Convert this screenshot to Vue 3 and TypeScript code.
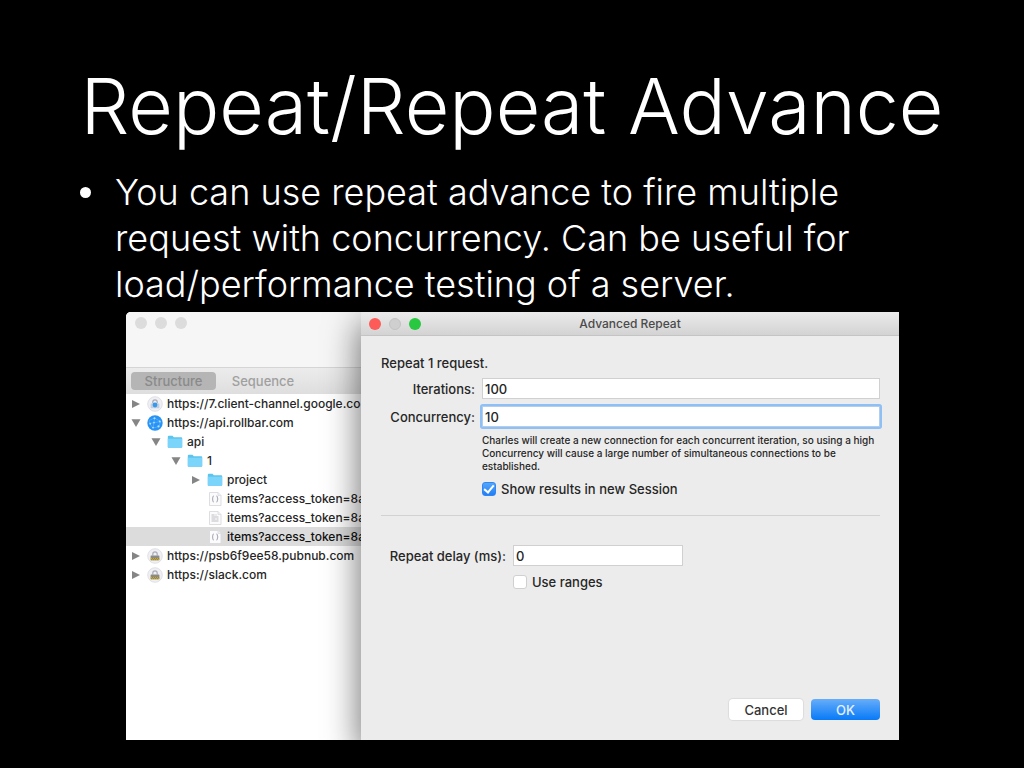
<script setup lang="ts">
import { ref } from 'vue'

type IconKind = 'lock-blue' | 'globe' | 'folder' | 'json' | 'text' | 'lock'

interface TreeRow {
  label: string
  icon: IconKind
  depth: number
  arrow?: 'open' | 'closed'
  selected?: boolean
}

const rows: TreeRow[] = [
  { label: 'https://7.client-channel.google.co', icon: 'lock-blue', depth: 0, arrow: 'closed' },
  { label: 'https://api.rollbar.com', icon: 'globe', depth: 0, arrow: 'open' },
  { label: 'api', icon: 'folder', depth: 1, arrow: 'open' },
  { label: '1', icon: 'folder', depth: 2, arrow: 'open' },
  { label: 'project', icon: 'folder', depth: 3, arrow: 'closed' },
  { label: 'items?access_token=8a', icon: 'json', depth: 3 },
  { label: 'items?access_token=8a', icon: 'text', depth: 3 },
  { label: 'items?access_token=8a', icon: 'json', depth: 3, selected: true },
  { label: 'https://psb6f9ee58.pubnub.com', icon: 'lock', depth: 0, arrow: 'closed' },
  { label: 'https://slack.com', icon: 'lock', depth: 0, arrow: 'closed' },
]

const iterations = ref('100')
const concurrency = ref('10')
const delay = ref('0')
const showResults = ref(true)
const useRanges = ref(false)
</script>

<template>
  <main class="slide">
    <h1>Repeat/Repeat Advance</h1>
    <ul class="points">
      <li>
        <span class="bullet"></span>
        <p>You can use repeat advance to fire multiple request with concurrency. Can be useful for load/performance testing of a server.</p>
      </li>
    </ul>

    <section class="desktop">
      <div class="browser">
        <header class="browser-bar">
          <span class="light"></span><span class="light"></span><span class="light"></span>
        </header>
        <nav class="tabs">
          <button type="button" class="tab active">Structure</button>
          <button type="button" class="tab">Sequence</button>
        </nav>
        <ul class="tree">
          <li v-for="(row, i) in rows" :key="i" :class="['row', 'depth-' + row.depth, { selected: row.selected }]">
            <span class="arrow">
              <svg v-if="row.arrow" width="10" height="10" viewBox="0 0 10 10" fill="#858585">
                <path v-if="row.arrow === 'closed'" d="M1 1 9 5 1 9Z" />
                <path v-else d="M.5 1.2h9L5 9Z" />
              </svg>
            </span>
            <svg class="icon" width="16" height="16" viewBox="0 0 16 16">
              <template v-if="row.icon === 'lock-blue' || row.icon === 'lock'">
                <circle cx="8" cy="8" r="7.3" fill="#f0f0f4" stroke="#d9dae0" stroke-width=".8" />
                <path d="M5.8 7.500V6a2.200 2.200 0 0 1 4.400 0v1.500" fill="none" stroke="#a9adb8" stroke-width="1.200" />
                <rect x="3.600" y="7.400" width="8.800" height="4.800" rx=".6" :fill="row.icon === 'lock' ? '#8b8a86' : '#c3cfdf'" />
                <path v-if="row.icon === 'lock'" d="M3.600 10h8.800v2.200H3.600Z" fill="#d2b548" />
                <path v-if="row.icon === 'lock'" d="M4.400 12.200l1.200-2.200m.8 2.200 1.200-2.200m.8 2.200 1.200-2.200m.8 2.200 1.200-2.200" stroke="#6b6033" stroke-width=".7" />
                <circle v-if="row.icon === 'lock-blue'" cx="8" cy="9" r="2.400" fill="#3699ee" />
              </template>
              <template v-else-if="row.icon === 'globe'">
                <circle cx="8" cy="8" r="7.700" fill="#2793f5" />
                <path d="M2 5.500 7.500 3l6 3.500-1.500 5-6 1.500-3-4ZM7.500 3 6 13M2.200 8.500l11.300-2" fill="none" stroke="#5db2fa" stroke-width=".7" />
                <g fill="#b5defd">
                  <circle cx="7.500" cy="3.200" r="1" /><circle cx="3.200" cy="8.700" r=".9" />
                  <circle cx="12.800" cy="6.500" r=".9" /><circle cx="6" cy="12.600" r=".9" />
                  <circle cx="11.500" cy="11.400" r="1.100" /><circle cx="7" cy="7.600" r=".9" />
                </g>
              </template>
              <template v-else-if="row.icon === 'folder'">
                <path d="M.8 2.800q0-1 1-1h3.700l1.300 1.400h7.400q1 0 1 1v8.800q0 .8-.8.800H1.600q-.8 0-.8-.8Z" fill="#5cc4ed" />
                <path d="M.8 4.800h14.400V13q0 .8-.8.800H1.600q-.8 0-.8-.8Z" fill="#7bd5fa" />
              </template>
              <template v-else>
                <path d="M2.500 1.500h8.500l3 3v10H2.500Z" fill="#fbfbfc" stroke="#d9d9df" stroke-width=".9" />
                <path d="M11 1.500v3h3" fill="#eeeef2" stroke="#d9d9df" stroke-width=".7" />
                <path v-if="row.icon === 'json'" d="M6.800 5q-1 0-1 1v1.200q0 .8-.8.800.8 0 .8.800V10q0 1 1 1M9.400 5q1 0 1 1v1.200q0 .8.800.8-.8 0-.8.800V10q0 1-1 1" fill="none" stroke="#9b9ba8" stroke-width=".9" />
                <path v-else d="M4.500 5h3m1 0h1M4.500 7h7M4.500 9h4m1 0h2M4.500 11h7" stroke="#b4b4be" stroke-width=".9" />
              </template>
            </svg>
            <span class="name">{{ row.label }}</span>
          </li>
        </ul>
      </div>

      <form class="dialog" @submit.prevent>
        <header class="dialog-bar">
          <div class="lights">
            <span class="light red"></span><span class="light gray"></span><span class="light green"></span>
          </div>
          <h2>Advanced Repeat</h2>
        </header>
        <div class="dialog-body">
          <p class="intro">Repeat 1 request.</p>
          <div class="fields">
            <label for="iterations">Iterations:</label>
            <input id="iterations" v-model="iterations" type="text" />
            <label for="concurrency">Concurrency:</label>
            <input id="concurrency" v-model="concurrency" class="focused" type="text" />
            <p class="help">Charles will create a new connection for each concurrent iteration, so using a high Concurrency will cause a large number of simultaneous connections to be established.</p>
            <label class="check results">
              <input v-model="showResults" type="checkbox" />Show results in new Session
            </label>
          </div>
          <hr />
          <div class="fields delay">
            <label for="delay">Repeat delay (ms):</label>
            <input id="delay" v-model="delay" type="text" />
            <label class="check ranges">
              <input v-model="useRanges" type="checkbox" />Use ranges
            </label>
          </div>
          <footer class="actions">
            <button type="button" class="cancel">Cancel</button>
            <button type="submit" class="ok">OK</button>
          </footer>
        </div>
      </form>
    </section>
  </main>
</template>

<style>
body {
  margin: 0;
  background: #000;
}
</style>

<style scoped>
* {
  box-sizing: border-box;
}

.slide {
  display: flex;
  flex-direction: column;
  min-height: 100vh;
  padding: 60px 80px 28px;
  background: #000;
  color: #fff;
  font-family: Inter, "Liberation Sans", sans-serif;
}

h1,
h2,
p,
ul {
  margin: 0;
  padding: 0;
  list-style: none;
  font-weight: inherit;
}

h1 {
  font-size: 77px;
  line-height: 92px;
  font-weight: 300;
  text-align: center;
  white-space: nowrap;
}

.points {
  margin-top: 17px;
  font-size: 36px;
  line-height: 46px;
  font-weight: 300;
}

.points li {
  display: flex;
  gap: 24px;
}

.bullet {
  flex: none;
  width: 11px;
  height: 11px;
  margin-top: 18px;
  border-radius: 50%;
  background: #fff;
}

.points p {
  max-width: 750px;
}

.desktop {
  display: flex;
  flex: 1;
  margin: 5px 45px 0 46px;
  overflow: hidden;
  border-top-left-radius: 5px;
  background: #fff;
  color: #262626;
  font-size: 13px;
  font-weight: 500;
}

.browser {
  flex: 0 0 235px;
  min-width: 0;
  overflow: hidden;
  background: #fff;
}

.browser-bar {
  display: flex;
  gap: 8px;
  height: 55px;
  padding: 5px 9px;
  background: #f6f6f6;
}

.light {
  width: 12px;
  height: 12px;
  border-radius: 50%;
  background: #dcdcdc;
}

.tabs {
  display: flex;
  gap: 1px;
  height: 27px;
  padding: 4px 5px;
  border-top: 1px solid #d5d5d5;
  background: linear-gradient(#ececec, #dedede);
}

.tab {
  width: 92px;
  height: 18px;
  padding: 0;
  border: 0;
  border-radius: 4px;
  background: none;
  color: #a0a0a0;
  font: inherit;
  line-height: 18px;
}

.tab.active {
  width: 85px;
  background: #b5b5b5;
  color: #8a8a8a;
}

.row {
  display: flex;
  align-items: center;
  height: 19px;
  padding-left: 5px;
  font-size: 12px;
  white-space: nowrap;
}

.depth-1 {
  padding-left: 25px;
}

.depth-2 {
  padding-left: 45px;
}

.depth-3 {
  padding-left: 65px;
}

.row.selected {
  background: #dcdcdc;
  color: #111;
}

.arrow {
  display: flex;
  flex: none;
  width: 16px;
}

.icon {
  flex: none;
  margin-right: 4px;
}

.dialog {
  position: relative;
  display: flex;
  flex: 1;
  flex-direction: column;
  min-width: 0;
  border-top-left-radius: 5px;
  background: #ececec;
  box-shadow: 0 12px 34px 2px rgba(0, 0, 0, 0.55);
}

.dialog-bar {
  display: grid;
  grid-template-columns: 60px 1fr 60px;
  align-items: center;
  height: 24px;
  padding: 0 8px;
  border-bottom: 1px solid #c4c4c4;
  border-top-left-radius: 5px;
  background: linear-gradient(#ebebeb, #d3d3d3);
}

.lights {
  display: flex;
  gap: 8px;
}

.light.red {
  background: #fc5b57;
}

.light.gray {
  border: 1px solid #c3c3c3;
  background: #cfcfcf;
}

.light.green {
  background: #28c840;
}

h2 {
  color: #4b4b4b;
  font-size: 12px;
  text-align: center;
}

.dialog-body {
  display: flex;
  flex: 1;
  flex-direction: column;
  padding: 18px 19px 20px 20px;
}

.intro {
  line-height: 18px;
}

.fields {
  display: grid;
  grid-template-columns: 94px 1fr;
  align-items: center;
  gap: 7px;
  margin-top: 6px;
}

.fields > label:not(.check) {
  text-align: right;
  white-space: nowrap;
}

input[type="text"] {
  width: 100%;
  height: 21px;
  padding: 0 2px;
  border: 1px solid #d0d0d0;
  outline: 0;
  background: #fff;
  color: #262626;
  font: inherit;
}

input.focused {
  border-color: #b5cde8;
  border-radius: 1px;
  box-shadow: 0 0 0 2px #8fc0f5;
}

.help {
  grid-column: 2;
  font-size: 10px;
  line-height: 13px;
}

.check {
  display: flex;
  grid-column: 2;
  align-items: center;
  gap: 5px;
  height: 18px;
}

.check input {
  display: grid;
  width: 14px;
  height: 14px;
  margin: 0;
  place-items: center;
  border: 1px solid #d0d0d0;
  border-radius: 3px;
  appearance: none;
  background: #fff;
}

.check input:checked {
  border-color: #2d87f5;
  background: linear-gradient(#55a6fa, #237ef5);
}

.check input:checked::after {
  width: 4px;
  height: 8px;
  margin-bottom: 2px;
  border: solid #fff;
  border-width: 0 2px 2px 0;
  transform: rotate(40deg);
  content: "";
}

hr {
  width: 100%;
  height: 1px;
  margin: 17px 0 29px;
  border: 0;
  background: #d2d2d2;
}

.fields.delay {
  grid-template-columns: 125px 170px;
  margin-top: 0;
}

.actions {
  display: flex;
  gap: 8px;
  justify-content: flex-end;
  margin-top: auto;
}

.actions button {
  height: 21px;
  padding: 0;
  border: 0;
  border-radius: 4px;
  font: inherit;
}

.cancel {
  width: 74px;
  background: #fff;
  box-shadow: 0 0 1px 1px rgba(0, 0, 0, 0.07);
  color: #333;
}

.ok {
  width: 69px;
  background: linear-gradient(#66adfa, #087af7);
  color: #e3f0ff;
}
</style>
